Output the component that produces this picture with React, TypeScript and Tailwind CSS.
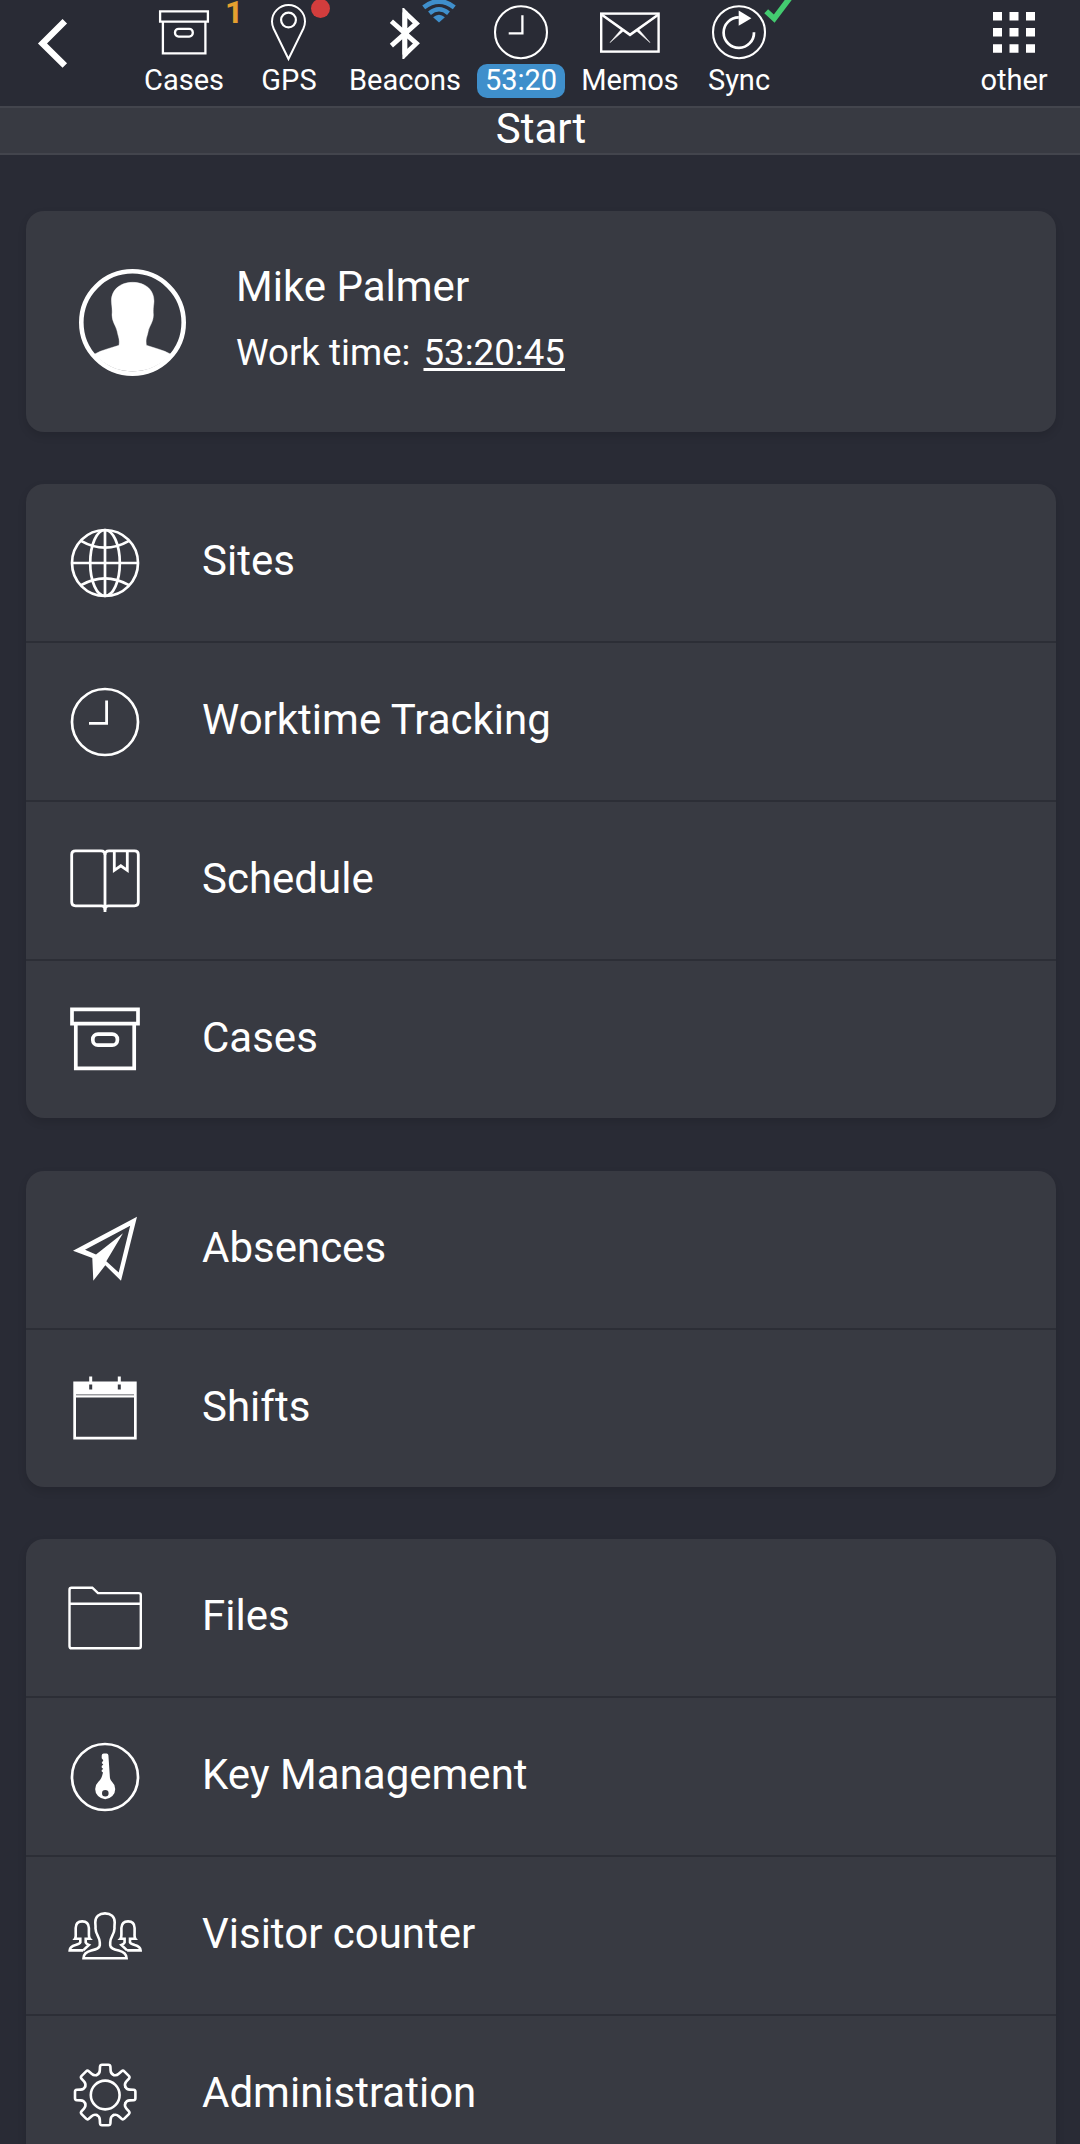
import { ReactNode } from 'react';

interface IconProps {
  size: number;
  children: ReactNode;
}

interface TabProps {
  label: string;
  icon: ReactNode;
  className: string;
  badge?: ReactNode;
  active?: boolean;
}

interface MenuItem {
  label: string;
  icon: ReactNode;
}

const Icon: React.FC<IconProps> = ({ size, children }) => (
  <svg
    width={size}
    height={size}
    viewBox={`0 0 ${size} ${size}`}
    fill="none"
    stroke="currentColor"
    className="block shrink-0"
  >
    {children}
  </svg>
);

/* Toolbar icons, 64x64 */

const BoxSmallIcon = () => (
  <Icon size={64}>
    <g strokeWidth="2.3">
      <path d="M8.1 11.3H55.9V21.7H8.1Z" />
      <path d="M10.9 21.7V53.4H53.4V21.7" />
      <rect x="23" y="28.8" width="17.8" height="7.8" rx="3.6" />
    </g>
  </Icon>
);

const PinIcon = () => (
  <Icon size={64}>
    <path
      d="M31.5 59L16.6 28.5C15.6 26.3 15 23.8 15 21.5A16.5 16.5 0 0 1 48 21.5C48 23.8 47.4 26.3 46.4 28.5Z"
      strokeWidth="2"
    />
    <circle cx="31.5" cy="20" r="7.4" strokeWidth="2.2" />
  </Icon>
);

const BluetoothIcon = () => (
  <Icon size={64}>
    <path
      d="M18.4 21.2L43.4 43.4L31.8 54.5V12.5L43.4 23.4L18.4 45.6"
      strokeWidth="4.8"
      strokeMiterlimit="2"
    />
    <path d="M29.4 8H31L34.2 11.5V55.5L31 59H29.4Z" fill="currentColor" stroke="none" />
  </Icon>
);

const ClockSmallIcon = () => (
  <Icon size={64}>
    <circle cx="32" cy="32.2" r="26" strokeWidth="2.1" />
    <path d="M33.4 15.3V33.3H19.7" strokeWidth="2.3" />
  </Icon>
);

const MailIcon = () => (
  <Icon size={64}>
    <rect x="3.2" y="13.6" width="57.4" height="38" strokeWidth="2.4" />
    <path d="M3.5 14.5L32 34.8L60.5 14.5" strokeWidth="2.6" />
    <path
      d="M23.2 29.4L12 42.6L25.4 31ZM40.8 29.4L52 42.6L38.6 31Z"
      fill="currentColor"
      strokeWidth="0.5"
    />
  </Icon>
);

const SyncIcon = () => (
  <Icon size={64}>
    <circle cx="32" cy="32.2" r="26" strokeWidth="2.1" />
    <path d="M47 32.2A15.2 15.2 0 1 1 31.8 17.4" strokeWidth="2.7" />
    <path d="M31.7 10.6L44.4 18.2L31.7 25.7Z" fill="currentColor" stroke="none" />
  </Icon>
);

const GridIcon = () => (
  <Icon size={64}>
    <path
      d="M11 12H20V20.5H11ZM27.5 12H36.5V20.5H27.5ZM44 12H53V20.5H44ZM11 28H20V36.5H11ZM27.5 28H36.5V36.5H27.5ZM44 28H53V36.5H44ZM11 44.3H20V52.8H11ZM27.5 44.3H36.5V52.8H27.5ZM44 44.3H53V52.8H44Z"
      fill="currentColor"
      stroke="none"
    />
  </Icon>
);

/* Menu icons, 80x80 */

const GlobeIcon = () => (
  <Icon size={80}>
    <g strokeWidth="2.7">
      <circle cx="40" cy="40" r="33" />
      <ellipse cx="40" cy="40" rx="14.8" ry="33" />
      <path d="M40 7V73M7 40H73" />
      <path d="M16 17.8Q40 31.5 64 17.8M16 62.2Q40 48.5 64 62.2" />
    </g>
  </Icon>
);

const ClockIcon = () => (
  <Icon size={80}>
    <circle cx="40" cy="40" r="33" strokeWidth="2.7" />
    <path d="M41.6 18.5V41.3H24" strokeWidth="2.8" />
  </Icon>
);

const BookIcon = () => (
  <Icon size={80}>
    <g strokeWidth="2.8">
      <path d="M40 71V14Q40 9.8 36 9.8H10.5Q6.7 9.8 6.7 13.5V61Q6.7 64.8 10.5 64.8H36.5Q40 64.8 40 69" />
      <path d="M40 14Q40 9.8 44 9.8H69.5Q73.3 9.8 73.3 13.5V61Q73.3 64.8 69.5 64.8H43.5Q40 64.8 40 69" />
      <path d="M49.3 10V29.3L55.8 24.8L62.3 29.3V10" />
    </g>
  </Icon>
);

const BoxIcon = () => (
  <Icon size={80}>
    <g strokeWidth="3.7">
      <path d="M7 9.3H73V23.7H7Z" />
      <path d="M10.8 23.7V68.4H69.2V23.7" />
      <rect x="27.8" y="34.1" width="24.6" height="11" rx="5.2" />
    </g>
  </Icon>
);

const PlaneIcon = () => (
  <Icon size={80}>
    <path
      d="M72 6.8L8 40.8L27.3 48L28.3 70.8L40.3 55.3L56 70.8ZM65.2 15.8L53.7 62.5L41.3 51.2L58 23.2L31 44.5L20 39.8Z"
      fill="currentColor"
      fillRule="evenodd"
      stroke="none"
    />
  </Icon>
);

const CalendarIcon = () => (
  <Icon size={80}>
    <path
      d="M8.3 12.5H24.2V7.5H27.2V12.5H52.8V7.5H55.8V12.5H71.7V70.5H8.3ZM11 28.5V67.7H69V28.5ZM24.2 15.5V20.5H27.2V15.5ZM52.8 15.5V20.5H55.8V15.5ZM11 25.6V26.3H69V25.6Z"
      fill="currentColor"
      fillRule="evenodd"
      stroke="none"
    />
  </Icon>
);

const FolderIcon = () => (
  <Icon size={80}>
    <g strokeWidth="2.4">
      <path d="M4.5 11.7Q4.5 9.7 6.5 9.7H27.3L33 15.1H73.8Q75.8 15.1 75.8 17.1V68.3Q75.8 70.3 73.8 70.3H6.5Q4.5 70.3 4.5 68.3Z" />
      <path d="M4.5 25.8H75.8" />
    </g>
  </Icon>
);

const KeyIcon = () => (
  <Icon size={80}>
    <circle cx="40" cy="40" r="33" strokeWidth="2.7" />
    <path
      d="M38.7 16.5H41.7Q43.2 16.7 43.4 18.3L44.9 40.5Q45.2 43 47 44.8A10 10 0 1 1 33.4 44.8Q36.3 42 37.2 38.5L38 35.6L36.7 34.4V33L38.2 32L36.7 30.5V29L38.3 27.6L36.7 26L38.3 23.2L36.7 21.2V18.5Q36.9 16.6 38.7 16.5ZM40.3 52.9A3.3 3.3 0 1 0 40.3 59.5A3.3 3.3 0 1 0 40.3 52.9Z"
      fill="currentColor"
      fillRule="evenodd"
      stroke="none"
    />
  </Icon>
);

const PEOPLE_SIDE =
  'M18.2 54.4H4.7Q5 50.6 10.5 49.1Q14.8 47.8 15.3 46.4V42.8H10Q11 41.5 10.7 37V32Q10.9 25.4 17.2 25.4Q23.5 25.4 23.9 32V37Q23.7 41.5 24.9 42.8H20.7V46.4Q21.4 48 23.9 48.9L18.2 54.4';

const PeopleIcon = () => (
  <Icon size={80}>
    <g strokeWidth="2.6">
      <path d="M40 17.4C34.2 17.4 30.3 20.8 30.3 26.3C30.3 28.8 30.7 29.5 30.5 32.5C30.6 38.5 34.8 41 34.8 46.5V49.4C34.5 52.5 31.5 53.3 26.3 54.6Q18.6 56.6 18.5 62.3H61.6Q61.4 56.6 53.7 54.6C48.5 53.3 45.5 52.5 45.2 49.4V46.5C45.2 41 49.4 38.5 49.5 32.5C49.3 29.5 49.7 28.8 49.7 26.3C49.7 20.8 45.8 17.4 40 17.4Z" />
      <path d={PEOPLE_SIDE} />
      <path d={PEOPLE_SIDE} transform="translate(80.3 0) scale(-1 1)" />
    </g>
  </Icon>
);

const GEAR_ANGLES = [0, 45, 90, 135, 180, 225, 270, 315];

const GearIcon = () => (
  <Icon size={80}>
    <g transform="translate(40.2 40)" strokeWidth="2.6" strokeLinecap="round">
      <circle r="14.4" />
      {GEAR_ANGLES.map((angle) => (
        <path
          key={angle}
          d="M-8.3 -20.1C-6.2 -21 -5.5 -22.2 -5.4 -24.6L-5.2 -28.4Q-5 -30.2 -3.2 -30.2H3.2Q5 -30.2 5.2 -28.4L5.4 -24.6C5.5 -22.2 6.2 -21 8.3 -20.1"
          transform={`rotate(${angle})`}
        />
      ))}
    </g>
  </Icon>
);

const Avatar = () => (
  <Icon size={107}>
    <circle cx="53.5" cy="53.5" r="51.2" strokeWidth="4.6" />
    <path
      d="M53.7 13.3C66 13.3 75 20.5 75 32C75 36 73.8 38.5 74.4 46C74.4 53 70.4 56.5 69.2 62.5C67.8 69 66.5 69.5 67.4 76.3C76 79.2 84 80.8 91.8 85.2A51 51 0 0 1 15.4 85.2C23 80.8 31.5 79.2 40 76.3C40.8 69.5 39.5 69 38.2 62.5C37 56.5 33 53 33 46C33.5 38.5 32.4 36 32.4 32C32.4 20.5 41.4 13.3 53.7 13.3Z"
      fill="currentColor"
      stroke="currentColor"
      strokeWidth="0.4"
    />
  </Icon>
);

const WifiBadge = () => (
  <svg
    width="36"
    height="24"
    viewBox="0 0 36 24"
    fill="none"
    stroke="currentColor"
    className="absolute left-[79px] top-0 text-[#3f8fcb]"
  >
    <path d="M18 22.5L12.1 17.2Q18 12.2 23.9 17.2Z" fill="currentColor" stroke="none" />
    <path d="M8.5 13.2Q18 5.2 27.5 13.2" strokeWidth="4.4" />
    <path d="M2.7 7.3Q18 -4.4 33.3 7.3" strokeWidth="4.8" />
  </svg>
);

const CheckBadge = () => (
  <svg
    width="30"
    height="24"
    viewBox="0 0 30 24"
    fill="none"
    stroke="currentColor"
    className="absolute left-[78px] top-0 text-[#43cb70]"
  >
    <path d="M2.2 11.2L10.2 18.6L26.5 -3" strokeWidth="5.6" />
  </svg>
);

const Tab: React.FC<TabProps> = ({ label, icon, className, badge, active }) => (
  <div className={`relative flex flex-col items-center ${className}`}>
    {icon}
    <div
      className={`h-[34px] text-[29px] leading-[32px] whitespace-nowrap ${
        active ? 'w-[88px] rounded-[10px] bg-[#3f8fcb] text-center' : ''
      }`}
    >
      {label}
    </div>
    {badge}
  </div>
);

const MenuCard: React.FC<{ items: MenuItem[]; className: string }> = ({
  items,
  className,
}) => (
  <div
    className={`mx-[26px] w-[1030px] divide-y-2 divide-[#2c2e36] rounded-[18px] bg-[#383a42] shadow-[0_4px_8px_rgba(0,0,0,0.12)] ${className}`}
  >
    {items.map(({ label, icon }, index) => (
      <div
        key={label}
        className={`flex items-center gap-[57px] pl-[39px] ${
          index === items.length - 1 ? 'h-[157px]' : 'h-[159px]'
        }`}
      >
        {icon}
        <div className="pb-[3px] text-[42px] leading-none">{label}</div>
      </div>
    ))}
  </div>
);

const WORK_ITEMS: MenuItem[] = [
  { label: 'Sites', icon: <GlobeIcon /> },
  { label: 'Worktime Tracking', icon: <ClockIcon /> },
  { label: 'Schedule', icon: <BookIcon /> },
  { label: 'Cases', icon: <BoxIcon /> },
];

const PLANNING_ITEMS: MenuItem[] = [
  { label: 'Absences', icon: <PlaneIcon /> },
  { label: 'Shifts', icon: <CalendarIcon /> },
];

const ADMIN_ITEMS: MenuItem[] = [
  { label: 'Files', icon: <FolderIcon /> },
  { label: 'Key Management', icon: <KeyIcon /> },
  { label: 'Visitor counter', icon: <PeopleIcon /> },
  { label: 'Administration', icon: <GearIcon /> },
];

const Toolbar = () => (
  <div className="flex h-[106px]">
    <div className="w-[132px] pl-[36px]">
      <svg width="36" height="86" viewBox="0 0 36 86" fill="none" stroke="currentColor">
        <path d="M28.8 21.3L6.5 43.4L28.8 65.5" strokeWidth="6.4" />
      </svg>
    </div>
    <Tab
      label="Cases"
      className="w-[104px]"
      icon={<BoxSmallIcon />}
      badge={
        <span className="absolute left-[93px] top-0 text-[32px] leading-[24px] font-bold text-[#e5a02f]">
          1
        </span>
      }
    />
    <Tab
      label="GPS"
      className="w-[106px]"
      icon={<PinIcon />}
      badge={
        <span className="absolute left-[75px] top-[-1px] size-[19px] rounded-full bg-[#d23d3d]" />
      }
    />
    <Tab
      label="Beacons"
      className="w-[126px]"
      icon={<BluetoothIcon />}
      badge={<WifiBadge />}
    />
    <Tab label="53:20" className="w-[106px]" icon={<ClockSmallIcon />} active />
    <Tab label="Memos" className="w-[112px]" icon={<MailIcon />} />
    <Tab
      label="Sync"
      className="w-[106px]"
      icon={<SyncIcon />}
      badge={<CheckBadge />}
    />
    <Tab label="other" className="ml-auto mr-3 w-[108px]" icon={<GridIcon />} />
  </div>
);

const App: React.FC = () => (
  <div className="h-[2144px] w-[1080px] overflow-hidden bg-[#292b35] font-['Roboto',sans-serif] text-white">
    <Toolbar />
    <div className="h-[49px] border-y-2 border-[#43454d] bg-[#383a42] pl-[2px] text-center text-[42px] leading-[42px]">
      Start
    </div>
    <div className="mx-[26px] mt-14 flex h-[221px] w-[1030px] gap-[50px] rounded-[18px] bg-[#383a42] pl-[53px] shadow-[0_4px_8px_rgba(0,0,0,0.12)]">
      <div className="pt-[58px]">
        <Avatar />
      </div>
      <div className="pt-[51px]">
        <div className="text-[42px] leading-[50px]">Mike Palmer</div>
        <div className="mt-[18px] flex gap-[13px] text-[36.7px] leading-[46px]">
          <span>Work time:</span>
          <span className="underline decoration-[3px] underline-offset-[3px]">
            53:20:45
          </span>
        </div>
      </div>
    </div>
    <MenuCard items={WORK_ITEMS} className="mt-[52px]" />
    <MenuCard items={PLANNING_ITEMS} className="mt-[53px]" />
    <MenuCard items={ADMIN_ITEMS} className="mt-[52px]" />
  </div>
);

export default App;
